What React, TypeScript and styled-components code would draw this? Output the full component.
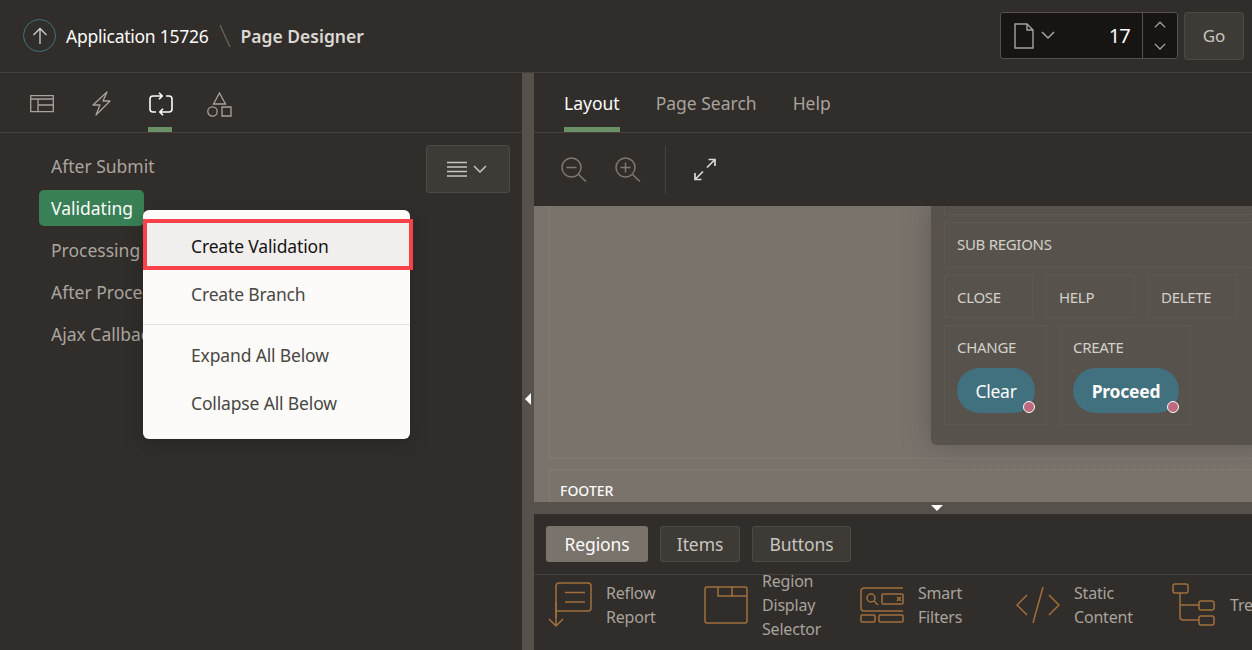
import React from "react";
import styled, { createGlobalStyle } from "styled-components";

const GlobalStyle = createGlobalStyle`
  html, body {
    margin: 0;
    padding: 0;
    height: 100%;
    overflow: hidden;
    background: #312d2a;
    font-family: "Noto Sans", "Open Sans", sans-serif;
  }
  * { box-sizing: border-box; }
`;

const Page = styled.div`
  width: 1252px;
  height: 650px;
  display: flex;
  flex-direction: column;
  overflow: hidden;
  background: #312d2a;
`;

const Header = styled.header`
  height: 73px;
  flex: none;
  display: flex;
  align-items: center;
  padding: 0 8px 1px 23px;
  border-bottom: 1px solid #45413c;
`;

const UpButton = styled.div`
  width: 33px;
  height: 33px;
  display: flex;
  align-items: center;
  justify-content: center;
  margin-right: 10px;
  border: 1px solid #3f7482;
  border-radius: 50%;
`;

const AppName = styled.span`
  font-size: 17.5px;
  letter-spacing: -0.25px;
  color: #fcfbfa;
`;

const Crumb = styled.svg`
  margin: 0 10px 0 10px;
`;

const PageName = styled.span`
  font-size: 17.5px;
  font-weight: 600;
  color: #dcd9d4;
`;

const Spacer = styled.div`
  flex: 1;
`;

const PagePicker = styled.div`
  width: 178px;
  height: 47px;
  margin-right: 6px;
  display: flex;
  background: #161513;
  border: 1px solid #56524b;
  border-radius: 3px;
`;

const PickerValue = styled.div`
  flex: 1;
  display: flex;
  align-items: center;
  gap: 7px;
  padding: 0 12px 0 13px;
  border-right: 1px solid #56524b;
`;

const PageNumber = styled.span`
  margin-left: auto;
  font-size: 20px;
  letter-spacing: -0.8px;
  color: #fcfbfa;
`;

const Stepper = styled.div`
  width: 34px;
  display: flex;
  flex-direction: column;
  align-items: center;
  justify-content: center;
  gap: 14px;
`;

const GoButton = styled.button`
  width: 60px;
  height: 48px;
  padding: 0;
  font: inherit;
  font-size: 17px;
  color: #c9c5bf;
  background: #3e3b37;
  border: 1px solid #4d4a45;
  border-radius: 3px;
`;

const Main = styled.div`
  flex: 1;
  min-height: 0;
  display: grid;
  grid-template-columns: 522px 12px 1fr;
`;

const LeftPane = styled.section`
  position: relative;
  display: flex;
  flex-direction: column;
`;

const IconTabs = styled.nav`
  height: 60px;
  flex: none;
  display: flex;
  gap: 35px;
  padding-left: 30px;
  border-bottom: 1px solid #45413c;
`;

const IconTab = styled.div<{ $active?: boolean }>`
  width: 24px;
  height: 59px;
  display: flex;
  justify-content: center;
  padding-top: 19px;
  border-bottom: 5px solid ${(p) => (p.$active ? "#6b9267" : "transparent")};
`;

const TreeArea = styled.div`
  flex: 1;
  display: flex;
  justify-content: space-between;
  padding: 12px 12px 0 39px;
`;

const Tree = styled.ul`
  list-style: none;
  margin: 3px 0 0;
  padding: 0;
  display: flex;
  flex-direction: column;
  gap: 6px;
  align-items: flex-start;
`;

const TreeItem = styled.li<{ $selected?: boolean }>`
  height: 36px;
  padding: 0 11px 0 12px;
  line-height: 37px;
  font-size: 17.5px;
  white-space: nowrap;
  border-radius: 5px;
  color: ${(p) => (p.$selected ? "#fcfbfa" : "#aaa59e")};
  background: ${(p) => (p.$selected ? "#398056" : "transparent")};
`;

const MenuButton = styled.button`
  width: 84px;
  height: 48px;
  display: flex;
  align-items: center;
  justify-content: center;
  gap: 6px;
  padding: 0 2px 0 0;
  background: #3e3b37;
  border: 1px solid #4d4a45;
  border-radius: 3px;
`;

const Menu = styled.div`
  position: absolute;
  left: 143px;
  top: 137px;
  width: 267px;
  height: 229px;
  padding: 12px 0;
  background: #fcfbfa;
  border-radius: 6px;
  box-shadow: 0 6px 20px rgba(0, 0, 0, 0.2);
`;

const MenuItem = styled.div<{ $focused?: boolean }>`
  position: relative;
  height: 48px;
  padding-left: 48px;
  line-height: 48px;
  font-size: 17.5px;
  letter-spacing: -0.15px;
  color: ${(p) => (p.$focused ? "#161513" : "#4a4743")};
  background: ${(p) => (p.$focused ? "#f1efed" : "transparent")};
`;

const Highlight = styled.div`
  position: absolute;
  left: 0;
  right: -3px;
  top: -3px;
  bottom: 0;
  border: 4px solid #f9414a;
`;

const MenuDivider = styled.hr`
  margin: 6px 0;
  border: 0;
  border-top: 1px solid #e4e1dd;
`;

const VSplitter = styled.div`
  display: flex;
  justify-content: center;
  padding-top: 320px;
  background: #56524b;
`;

const ArrowLeft = styled.i`
  width: 0;
  height: 0;
  border-top: 6px solid transparent;
  border-bottom: 6px solid transparent;
  border-right: 6px solid #fcfbfa;
`;

const RightPane = styled.section`
  min-width: 0;
  display: flex;
  flex-direction: column;
`;

const TextTabs = styled.nav`
  height: 60px;
  flex: none;
  display: flex;
  gap: 36px;
  padding-left: 30px;
  border-bottom: 1px solid #45413c;
`;

const TextTab = styled.div<{ $active?: boolean }>`
  height: 59px;
  line-height: 60px;
  font-size: 17.5px;
  color: ${(p) => (p.$active ? "#fcfbfa" : "#a8a39c")};
  border-bottom: 5px solid ${(p) => (p.$active ? "#6b9267" : "transparent")};
`;

const Toolbar = styled.div`
  height: 73px;
  flex: none;
  display: flex;
  align-items: center;
  padding-left: 27px;
`;

const ToolIcon = styled.div`
  width: 27px;
  display: flex;
  margin-right: 27px;
`;

const ToolDivider = styled.div`
  width: 1px;
  height: 48px;
  margin: 0 28px 0 -4px;
  background: #45413c;
`;

const Canvas = styled.div`
  position: relative;
  height: 296px;
  flex: none;
  display: flex;
  flex-direction: column;
  gap: 10px;
  padding-left: 15px;
  overflow: hidden;
  background: #7a736c;
`;

const BodyRegion = styled.div`
  height: 253px;
  flex: none;
  border-left: 1px dotted #8a847d;
  border-bottom: 1px dotted #8a847d;
`;

const FooterRegion = styled.div`
  flex: 1;
  padding: 11px 0 0 10px;
  font-size: 14px;
  font-weight: 500;
  color: #fcfbfa;
  border-left: 1px dotted #8a847d;
  border-top: 1px dotted #8a847d;
`;

const Dialog = styled.div`
  position: absolute;
  left: 397px;
  top: 0;
  width: 340px;
  height: 239px;
  display: flex;
  flex-direction: column;
  gap: 7px;
  padding: 0 0 0 13px;
  background: #57534c;
  border-bottom-left-radius: 6px;
  box-shadow: 0 0 28px rgba(49, 45, 42, 0.35);
`;

const TopSlot = styled.div`
  height: 9px;
  flex: none;
  border: 1px dotted #655f58;
  border-top: 0;
`;

const Slot = styled.div<{ $w?: number; $h: number }>`
  flex: none;
  width: ${(p) => (p.$w ? `${p.$w}px` : "100%")};
  height: ${(p) => p.$h}px;
  padding: 11px 12px 0;
  font-size: 15px;
  letter-spacing: -0.3px;
  line-height: 20px;
  color: #d4d0ca;
  white-space: nowrap;
  border: 1px dotted #655f58;
`;

const SlotRow = styled.div`
  display: flex;
  gap: 13px;
`;

const DdButton = styled.div<{ $bold?: boolean; $w: number }>`
  position: relative;
  width: ${(p) => p.$w}px;
  height: 45px;
  margin-top: 11px;
  line-height: 46px;
  text-align: center;
  font-size: 17.5px;
  letter-spacing: -0.25px;
  font-weight: ${(p) => (p.$bold ? 700 : 400)};
  color: #fcfbfa;
  background: #41707e;
  border-radius: 23px;
`;

const Pin = styled.i`
  position: absolute;
  right: 0;
  bottom: 0;
  width: 12px;
  height: 12px;
  background: #bf6a80;
  border: 1px solid #fcfbfa;
  border-radius: 50%;
`;

const HSplitter = styled.div`
  height: 12px;
  flex: none;
  padding: 3px 0 0 397px;
  background: #56524b;
`;

const ArrowDown = styled.i`
  display: block;
  width: 0;
  height: 0;
  border-left: 6px solid transparent;
  border-right: 6px solid transparent;
  border-top: 6px solid #fcfbfa;
`;

const GalleryTabs = styled.div`
  height: 61px;
  flex: none;
  display: flex;
  gap: 12px;
  padding: 12px 0 0 12px;
  border-bottom: 1px solid #45413c;
`;

const GalleryTab = styled.div<{ $active?: boolean; $w: number }>`
  width: ${(p) => p.$w}px;
  height: 36px;
  line-height: ${(p) => (p.$active ? 36 : 34)}px;
  text-align: center;
  font-size: 17.5px;
  letter-spacing: -0.1px;
  color: ${(p) => (p.$active ? "#fcfbfa" : "#c9c5bf")};
  background: ${(p) => (p.$active ? "#7a736c" : "#3e3b37")};
  border: ${(p) => (p.$active ? "0" : "1px solid #4d4a45")};
  border-radius: 3px;
`;

const Gallery = styled.div`
  flex: 1;
  display: flex;
  padding-left: 14px;
`;

const GalleryItem = styled.div`
  width: 156px;
  height: 60px;
  flex: none;
  display: flex;
  align-items: center;
  gap: 14px;
`;

const GalleryLabel = styled.div`
  font-size: 16px;
  line-height: 24px;
  letter-spacing: -0.2px;
  color: #a8a39c;
`;

const Chevron = ({ color = "#a8a39c", w = 14, up = false }: { color?: string; w?: number; up?: boolean }) => (
  <svg width={w} height={w * 0.6} viewBox="0 0 14 8" fill="none" stroke={color} strokeWidth="1.5">
    <path d={up ? "M1 7.2 7 1.2l6 6" : "M1 .8l6 6 6-6"} />
  </svg>
);

const galleryStroke = { fill: "none", stroke: "#a06f3c", strokeWidth: 1.5 };

const galleryIcons = {
  reflow: (
    <svg width="44" height="46" viewBox="0 0 44 46" {...galleryStroke}>
      <path d="M8 36V4a3 3 0 0 1 3-3h29a3 3 0 0 1 3 3v22a3 3 0 0 1-3 3H8" />
      <path d="M17 10.500h20M17 20h20" />
      <path d="M8 20v24M1 37l7 7 7-7" />
    </svg>
  ),
  display: (
    <svg width="44" height="38" viewBox="0 0 44 38" {...galleryStroke}>
      <rect x="1" y="1" width="42" height="36" rx="2" />
      <path d="M14 1v9h29M28 1v9" />
    </svg>
  ),
  filters: (
    <svg width="44" height="36" viewBox="0 0 44 36" {...galleryStroke}>
      <path d="M43 1H4a3 3 0 0 0-3 3v17a3 3 0 0 0 3 3h39" />
      <circle cx="11" cy="11" r="4" />
      <path d="m14 14 4 4" />
      <rect x="22" y="7" width="21" height="10" rx="1" />
      <path d="m37 10 4 4m0-4-4 4" />
      <rect x="1" y="28" width="14" height="7" rx="1" />
      <rect x="19" y="28" width="24" height="7" rx="1" />
    </svg>
  ),
  staticContent: (
    <svg width="44" height="38" viewBox="0 0 44 38" {...galleryStroke}>
      <path d="M11 9 1 19l10 10M33 9l10 10-10 10M27 1 17 37" />
    </svg>
  ),
  tree: (
    <svg width="44" height="44" viewBox="0 0 44 44" {...galleryStroke}>
      <rect x="1" y="1" width="15" height="9" rx="2" />
      <rect x="27" y="18" width="15" height="9" rx="2" />
      <rect x="27" y="33" width="15" height="9" rx="2" />
      <path d="M8 10v24a3 3 0 0 0 3 3h16M8 22h19" />
    </svg>
  ),
};

const galleryItems = [
  { icon: galleryIcons.reflow, lines: ["Reflow", "Report"] },
  { icon: galleryIcons.display, lines: ["Region", "Display", "Selector"] },
  { icon: galleryIcons.filters, lines: ["Smart", "Filters"] },
  { icon: galleryIcons.staticContent, lines: ["Static", "Content"] },
  { icon: galleryIcons.tree, lines: ["Tree"] },
];

const treeNodes = ["After Submit", "Validating", "Processing", "After Processing", "Ajax Callback"];

const App = () => {
  return (
    <Page>
      <GlobalStyle />
      <Header>
        <UpButton>
          <svg width="16" height="18" viewBox="0 0 16 18" fill="none" stroke="#d4d0ca" strokeWidth="1.3">
            <path d="M8 17V2M1.5 8 8 1.5 14.500 8" />
          </svg>
        </UpButton>
        <AppName>Application 15726</AppName>
        <Crumb width="12" height="24" viewBox="0 0 12 24" fill="none" stroke="#6d6860" strokeWidth="1.2">
          <path d="M1 1l10 22" />
        </Crumb>
        <PageName>Page Designer</PageName>
        <Spacer />
        <PagePicker>
          <PickerValue>
            <svg width="20" height="26" viewBox="0 0 20 26" fill="none" stroke="#a8a39c" strokeWidth="1.4">
              <path d="M1 1h12l6 6v18H1zM13 1v6h6" />
            </svg>
            <Chevron />
            <PageNumber>17</PageNumber>
          </PickerValue>
          <Stepper>
            <Chevron up w={12} />
            <Chevron w={12} />
          </Stepper>
        </PagePicker>
        <GoButton>Go</GoButton>
      </Header>
      <Main>
        <LeftPane>
          <IconTabs>
            <IconTab>
              <svg width="24" height="19" viewBox="0 0 24 19" fill="none" stroke="#a8a39c" strokeWidth="1.3" style={{ marginTop: 2 }}>
                <path d="M.7 1.700h22.600v16H.7zM.7 5h22.600M8 5v12.700M8 11h15.300" />
              </svg>
            </IconTab>
            <IconTab>
              <svg width="20" height="25" viewBox="0 0 20 25" fill="none" stroke="#a8a39c" strokeWidth="1.3" strokeLinejoin="round" style={{ marginTop: -1 }}>
                <path d="M16 1 2 14h7L5 24l14-14h-7z" />
              </svg>
            </IconTab>
            <IconTab $active>
              <svg width="26" height="24" viewBox="0 0 26 24" fill="none" stroke="#fcfbfa" strokeWidth="1.6" style={{ flex: "none", marginLeft: 1 }}>
                <path d="M14 4H5a3 3 0 0 0-3 3v10a3 3 0 0 0 3 3h3M11 .8 14.200 4 11 7.200M12 20h9a3 3 0 0 0 3-3V7a3 3 0 0 0-3-3h-3M15 23.200 11.800 20 15 16.800" />
              </svg>
            </IconTab>
            <IconTab>
              <svg width="25" height="25" viewBox="0 0 25 25" fill="none" stroke="#a8a39c" strokeWidth="1.3" style={{ flex: "none" }}>
                <path d="m12.500 1 6 11h-12zM15 15h9v9h-9z" />
                <circle cx="5.500" cy="19.500" r="4.700" />
              </svg>
            </IconTab>
          </IconTabs>
          <TreeArea>
            <Tree>
              {treeNodes.map((node) => (
                <TreeItem key={node} $selected={node === "Validating"}>
                  {node}
                </TreeItem>
              ))}
            </Tree>
            <MenuButton>
              <svg width="20" height="16" viewBox="0 0 20 16" fill="none" stroke="#c9c5bf" strokeWidth="1.3">
                <path d="M0 1.500h20M0 6h20M0 10.500h20M0 15h20" />
              </svg>
              <Chevron color="#c9c5bf" />
            </MenuButton>
          </TreeArea>
          <Menu>
            <MenuItem $focused>
              Create Validation
              <Highlight />
            </MenuItem>
            <MenuItem>Create Branch</MenuItem>
            <MenuDivider />
            <MenuItem>Expand All Below</MenuItem>
            <MenuItem>Collapse All Below</MenuItem>
          </Menu>
        </LeftPane>
        <VSplitter>
          <ArrowLeft />
        </VSplitter>
        <RightPane>
          <TextTabs>
            <TextTab $active>Layout</TextTab>
            <TextTab>Page Search</TextTab>
            <TextTab>Help</TextTab>
          </TextTabs>
          <Toolbar>
            <ToolIcon>
              <svg width="26" height="25" viewBox="0 0 26 25" fill="none" stroke="#7f7972" strokeWidth="1.5">
                <circle cx="10.500" cy="10.500" r="9.500" />
                <path d="m17.500 17.500 7.500 7M5.500 10.500h10" />
              </svg>
            </ToolIcon>
            <ToolIcon>
              <svg width="26" height="25" viewBox="0 0 26 25" fill="none" stroke="#7f7972" strokeWidth="1.5">
                <circle cx="10.500" cy="10.500" r="9.500" />
                <path d="m17.500 17.500 7.500 7M5.500 10.500h10M10.500 5.500v10" />
              </svg>
            </ToolIcon>
            <ToolDivider />
            <svg width="22" height="23" viewBox="0 0 22 23" fill="none" stroke="#dcd9d4" strokeWidth="1.7">
              <path d="M14.500 1.500h6.500v6.500M21 1.500l-8 8M7.500 21.500H1V15M1 21.500l8-8" />
            </svg>
          </Toolbar>
          <Canvas>
            <BodyRegion />
            <FooterRegion>FOOTER</FooterRegion>
            <Dialog>
              <TopSlot />
              <Slot $h={46}>SUB REGIONS</Slot>
              <SlotRow>
                <Slot $w={89} $h={43}>CLOSE</Slot>
                <Slot $w={89} $h={43}>HELP</Slot>
                <Slot $w={89} $h={43}>DELETE</Slot>
              </SlotRow>
              <SlotRow>
                <Slot $w={103} $h={100}>
                  CHANGE
                  <DdButton $w={78}>
                    Clear
                    <Pin />
                  </DdButton>
                </Slot>
                <Slot $w={131} $h={100}>
                  CREATE
                  <DdButton $w={106} $bold>
                    Proceed
                    <Pin />
                  </DdButton>
                </Slot>
              </SlotRow>
            </Dialog>
          </Canvas>
          <HSplitter>
            <ArrowDown />
          </HSplitter>
          <GalleryTabs>
            <GalleryTab $active $w={102}>Regions</GalleryTab>
            <GalleryTab $w={80}>Items</GalleryTab>
            <GalleryTab $w={99}>Buttons</GalleryTab>
          </GalleryTabs>
          <Gallery>
            {galleryItems.map((item) => (
              <GalleryItem key={item.lines[0]}>
                {item.icon}
                <GalleryLabel>
                  {item.lines.map((line) => (
                    <div key={line}>{line}</div>
                  ))}
                </GalleryLabel>
              </GalleryItem>
            ))}
          </Gallery>
        </RightPane>
      </Main>
    </Page>
  );
};

export default App;
